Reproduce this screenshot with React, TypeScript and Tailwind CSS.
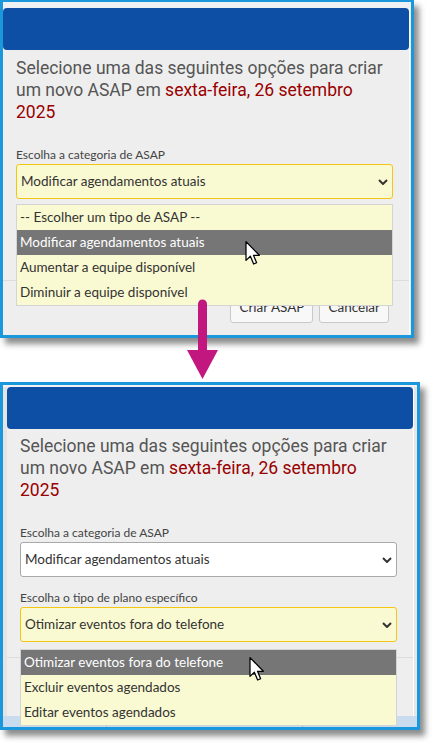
import React from "react";

const heading = "font-['Roboto',sans-serif] text-[17.5px] leading-[22px] text-[#555]";
const ui = "font-['Lato','Noto_Sans',sans-serif]";

const Chevron = () => (
  <svg width="10" height="6" viewBox="0 0 10 6" className="shrink-0">
    <polyline points="1,1 5,5 9,1" fill="none" stroke="#333" strokeWidth="2" />
  </svg>
);

const Pointer = ({ className }: { className: string }) => (
  <svg width="17" height="25" viewBox="0 0 13 20" className={className}>
    <path
      d="M0.5 0.5 L0.5 15.5 L4 12.2 L6.6 18.4 L9 17.4 L6.5 11.4 L11.2 11.4 Z"
      fill="#fff"
      stroke="#000"
      strokeWidth="1"
      strokeLinejoin="round"
    />
  </svg>
);

const Select = ({ value, yellow }: { value: string; yellow?: boolean }) => (
  <div
    className={`h-[35px] w-[377px] flex items-center justify-between pl-[4px] pr-[4px] rounded-[3px] border text-[13.5px] text-[#333] ${ui} ${
      yellow ? "bg-[#fafad2] border-[#f3c614]" : "bg-white border-[#a9a9a9]"
    }`}
  >
    <span>{value}</span>
    <Chevron />
  </div>
);

const Options = ({ items, active }: { items: string[]; active: number }) => (
  <div className={`w-[377px] border border-[#d4d4d4] bg-[#fafad2] text-[13.5px] ${ui}`}>
    {items.map((t, i) => (
      <div
        key={t}
        className={`h-[25px] leading-[25px] pl-[3px] ${
          i === active ? "bg-[#767676] text-white" : "text-[#333]"
        }`}
      >
        {t}
      </div>
    ))}
  </div>
);

const Buttons = () => (
  <div className={`flex justify-end gap-[6px] pr-[20px] ${ui}`}>
    {["Criar ASAP", "Cancelar"].map((b) => (
      <button
        key={b}
        className="h-[32px] px-[8px] border border-[#c8c8c8] bg-[#f8f8f8] rounded-[3px] text-[13.5px] text-[#333]"
      >
        {b}
      </button>
    ))}
  </div>
);

const Heading = ({ pt }: { pt: string }) => (
  <div className={`${heading} ${pt}`}>
    <p>Selecione uma das seguintes opções para criar</p>
    <p>
      um novo ASAP em <span className="text-[#900]">sexta-feira, 26 setembro</span>
    </p>
    <p className="text-[#900]">2025</p>
  </div>
);

export default function App() {
  return (
    <div className="relative w-[433px] h-[745px] bg-white overflow-hidden">
      {/* before */}
      <div className="w-[414px] border-x-[3px] border-t-2 border-b-[3px] border-[#1b98dc] bg-[#e9edf1] shadow-[5px_6px_6px_rgba(0,0,0,0.45)]">
        <div className="h-[6px] bg-[#eef1f4]" />
        <div className="w-[407px] bg-[#eeeeee] border-r border-white">
          <div className="h-[42px] rounded-[4px] bg-[#0e4fa6]" />
          <div className="px-[13px]">
            <Heading pt="pt-[7px]" />
            <div className={`mt-[23px] text-[12px] leading-[18px] text-[#444] ${ui}`}>
              Escolha a categoria de ASAP
            </div>
            <div className="relative">
              <Select value="Modificar agendamentos atuais" yellow />
              <div className="absolute left-0 top-[40px] z-10">
                <Options
                  items={[
                    "-- Escolher um tipo de ASAP --",
                    "Modificar agendamentos atuais",
                    "Aumentar a equipe disponível",
                    "Diminuir a equipe disponível",
                  ]}
                  active={1}
                />
                <Pointer className="absolute left-[229px] top-[37px]" />
              </div>
            </div>
          </div>
          <div className="mt-[81px] border-t border-[#dcdcdc] pt-[10px] pb-[12px]">
            <Buttons />
          </div>
        </div>
      </div>

      {/* arrow */}
      <svg width="32" height="82" viewBox="0 0 32 82" className="absolute left-[187px] top-[298px] z-20">
        <line x1="15.5" y1="6" x2="15.5" y2="56" stroke="#c1177f" strokeWidth="9" strokeLinecap="round" />
        <polygon points="0,52 31,52 15.5,81" fill="#c1177f" />
      </svg>

      {/* after */}
      <div className="mt-[44px] w-[420px] border-x-[3px] border-t-[3px] border-b-[3px] border-[#1b98dc] bg-[#e6e6e6] shadow-[5px_6px_6px_rgba(0,0,0,0.45)]">
        <div className="h-[2px] bg-[#f2f2f2]" />
        <div className="flex">
          <div className="w-[4px] bg-[#e4e4e4]" />
          <div className="w-[407px] bg-[#eeeeee] border-r border-white">
            <div className="h-[42px] rounded-[4px] bg-[#0e4fa6]" />
            <div className="px-[13px]">
              <Heading pt="pt-[6px]" />
              <div className={`mt-[23px] text-[12px] leading-[18px] text-[#444] ${ui}`}>
                Escolha a categoria de ASAP
              </div>
              <Select value="Modificar agendamentos atuais" />
              <div className={`mt-[12px] text-[12px] leading-[18px] text-[#444] ${ui}`}>
                Escolha o tipo de plano específico
              </div>
              <div className="relative">
                <Select value="Otimizar eventos fora do telefone" yellow />
                <div className="absolute left-0 top-[42px] z-10">
                  <Options
                    items={[
                      "Otimizar eventos fora do telefone",
                      "Excluir eventos agendados",
                      "Editar eventos agendados",
                    ]}
                    active={0}
                  />
                  <Pointer className="absolute left-[229px] top-[8px]" />
                </div>
              </div>
            </div>
            <div className="mt-[15px] border-t border-[#dcdcdc] pt-[10px] pb-[16px]">
              <Buttons />
            </div>
          </div>
        </div>
        <div className="h-[11px] flex bg-[#c9dcef]">
          <div className="w-[104px] border-r border-[#9fb6cc]" />
          <div className="w-[196px] border-r border-[#9fb6cc]" />
        </div>
      </div>
    </div>
  );
}
